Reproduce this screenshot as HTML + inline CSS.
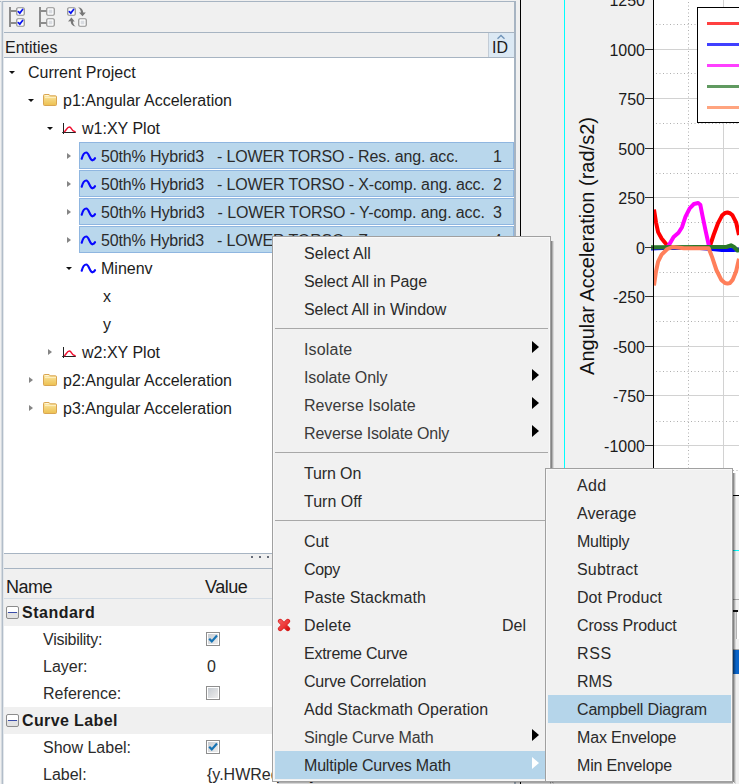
<!DOCTYPE html>
<html><head><meta charset="utf-8"><title>Plot Browser</title>
<style>
html,body{margin:0;padding:0}
body{width:739px;height:784px;overflow:hidden;position:relative;background:#f0f0f0;font-family:"Liberation Sans",sans-serif;font-size:16px;color:#1c1c1c}
.a{position:absolute}
.t{position:absolute;white-space:pre;line-height:20px;height:20px;margin-top:1px}
.sel{position:absolute;left:79px;width:433px;height:25px;background:#b9d7ec;border:1px solid #8fb6e0;border-radius:0}
.menu{position:absolute;background:#f1f1f1;border:1px solid #a0a0a0;box-sizing:border-box;box-shadow:inset 1px 1px 0 #f8f8f8,inset -1px -1px 0 #f8f8f8}
.mi{position:absolute;left:31px;white-space:pre;line-height:20px;height:20px;color:#2a2a2a;margin-top:1px;}
.sep{position:absolute;left:2px;height:1px;background:#a8a8a8}
.arr{position:absolute;width:0;height:0;border-top:6px solid transparent;border-bottom:6px solid transparent;border-left:7px solid #000;margin-top:1px}
.col{position:absolute;width:0;height:0;border-top:3.5px solid transparent;border-bottom:3.5px solid transparent;border-left:4px solid #858585;margin-top:.5px}
.exp{position:absolute;width:0;height:0;border-left:3.5px solid transparent;border-right:3.5px solid transparent;border-top:3px solid #111}
</style></head><body>
<!-- LEFT PANEL -->
<div class="a" style="left:0px;top:1px;width:515px;height:1px;background:#a7b4c2;"></div>
<div class="a" style="left:1px;top:1px;width:1px;height:783px;background:#d4dae0;"></div>
<div class="a" style="left:2px;top:1px;width:1px;height:783px;background:#b2bdc9;"></div>
<div class="a" style="left:3px;top:2px;width:1px;height:782px;background:#e4e8ec;"></div>
<div class="a" style="left:514px;top:1px;width:2px;height:783px;background:#a7b4c2;"></div>
<div class="a" style="left:4px;top:32px;width:510px;height:1px;background:#a7b4c2;"></div>
<div class="a" style="left:4px;top:57px;width:510px;height:1px;background:#a7b4c2;"></div>
<div class="a" style="left:4px;top:58px;width:510px;height:495px;background:#fff;"></div>
<div class="a" style="left:4px;top:553px;width:510px;height:1px;background:#a7b4c2;"></div>
<div class="a" style="left:4px;top:568px;width:510px;height:1px;background:#a7b4c2;"></div>
<div class="a" style="left:4px;top:598px;width:510px;height:1px;background:#d5dde5;"></div>
<div class="a" style="left:4px;top:626px;width:510px;height:81px;background:#fff;"></div>
<div class="a" style="left:4px;top:734px;width:510px;height:50px;background:#fff;"></div>
<div class="a" style="left:488px;top:33px;width:26px;height:24px;background:#dce9f4;border-left:1px solid #c3ccd6;box-sizing:border-box"></div>
<div class="t" style="left:492px;top:37px;">ID</div>
<svg class="a" style="left:496px;top:34px" width="10" height="6" viewBox="0 0 10 6"><path d="M1.5 4.8 L5 1.5 L8.5 4.8" fill="none" stroke="#6f93b8" stroke-width="1.3"/></svg>
<div class="t" style="left:5px;top:37px;">Entities</div>
<!-- TOOLBAR -->
<svg class="a" style="left:0;top:0" width="100" height="32" viewBox="0 0 100 32"><rect x="9" y="7" width="2" height="20" fill="#8c8c8c"/><rect x="11" y="10" width="6" height="2" fill="#8c8c8c"/><rect x="11" y="22" width="6" height="2" fill="#8c8c8c"/><rect x="16.75" y="7.75" width="7.5" height="7.5" rx="1.2" fill="#fff" stroke="#909090" stroke-width="1.2"/><path d="M18.3 11.6 L19.8 13.1 L22.6 9.5" fill="none" stroke="#0a14f0" stroke-width="1.7" stroke-linecap="round"/><rect x="16.75" y="18.75" width="7.5" height="7.5" rx="1.2" fill="#fff" stroke="#909090" stroke-width="1.2"/><path d="M18.3 22.6 L19.8 24.1 L22.6 20.5" fill="none" stroke="#0a14f0" stroke-width="1.7" stroke-linecap="round"/><rect x="39" y="7" width="2" height="20" fill="#8c8c8c"/><rect x="41" y="10" width="6" height="2" fill="#8c8c8c"/><rect x="41" y="22" width="6" height="2" fill="#8c8c8c"/><rect x="46.75" y="7.75" width="7.5" height="7.5" rx="1.2" fill="#fff" stroke="#909090" stroke-width="1.2"/><rect x="48.6" y="9.6" width="3.8" height="3.8" fill="#d9dce1"/><rect x="46.75" y="18.75" width="7.5" height="7.5" rx="1.2" fill="#fff" stroke="#909090" stroke-width="1.2"/><rect x="48.6" y="20.6" width="3.8" height="3.8" fill="#d9dce1"/><rect x="67.75" y="7.75" width="7.5" height="7.5" rx="1.2" fill="#fff" stroke="#909090" stroke-width="1.2"/><path d="M69.3 11.6 L70.8 13.1 L73.6 9.5" fill="none" stroke="#0a14f0" stroke-width="1.7" stroke-linecap="round"/><rect x="78.75" y="18.75" width="7.5" height="7.5" rx="1.2" fill="#fff" stroke="#909090" stroke-width="1.2"/><rect x="80.6" y="20.6" width="3.8" height="3.8" fill="#d9dce1"/><path d="M78 7.3 C81.5 7.6 83.2 10 83.2 12.6 L85.8 12.4 L82.5 16.2 L79 12.4 L81 12.5 C80.8 10.4 79.8 8.6 78 7.3z" fill="#777"/><path d="M75.9 26.6 C72.4 26.3 70.7 23.9 70.7 21.3 L68 21.4 L71.4 17.4 L74.7 21.4 L72.9 21.4 C73.1 23.5 74.1 25.3 75.9 26.6z" fill="#777"/></svg>
<!-- TREE -->
<div class="exp" style="left:9px;top:71px"></div>
<div class="t" style="left:28px;top:62px;">Current Project</div>
<div class="exp" style="left:28px;top:99px"></div>
<svg class="a" style="left:42px;top:92px" width="16" height="14" viewBox="0 0 16 14"><defs><linearGradient id="fg4292" x1="0" y1="0" x2="0" y2="1"><stop offset="0" stop-color="#fbe6a2"/><stop offset="1" stop-color="#ecc050"/></linearGradient></defs><path d="M2.5 2.5 h4.6 l1.2 1.3 h5.2 a1 1 0 0 1 1 1 v7.7 a1 1 0 0 1 -1 1 h-11 a1 1 0 0 1 -1 -1 v-9 a1 1 0 0 1 1 -1z" fill="url(#fg4292)" stroke="#d9a552" stroke-width="1"/><path d="M3.3 3.6 h3.4" stroke="#fff6dc" stroke-width="1.2"/><path d="M3 5.6 h11" stroke="#fdf0c4" stroke-width="1"/></svg>
<div class="t" style="left:63px;top:90px;">p1:Angular Acceleration</div>
<div class="exp" style="left:47px;top:127px"></div>
<svg class="a" style="left:61px;top:120px" width="16" height="14" viewBox="0 0 16 14"><path d="M2.5 3 V14 M1.2 12.5 H14.8" fill="none" stroke="#222" stroke-width="1"/><path d="M3.2 12 C5 11 6 7 8.4 7 C10.6 7 10.8 11 13 11.2 L14.6 11.8" fill="none" stroke="#f01030" stroke-width="1.4"/></svg>
<div class="t" style="left:82px;top:118px;">w1:XY Plot</div>
<div class="sel" style="top:142px"></div>
<div class="col" style="left:67px;top:152px"></div>
<svg class="a" style="left:79.6px;top:149.2px" width="17" height="14" viewBox="0 0 17 14"><path d="M1.7 9.7 C2.7 6 4.4 3.5 6.3 3.5 C9 3.5 9.7 11.3 12.4 11.3 C13.6 11 14.4 10.3 15 9.2" fill="none" stroke="#0808ff" stroke-width="2.2" stroke-linecap="round"/></svg>
<div class="t" style="left:101px;top:146px;color:#2b2b2b;letter-spacing:-0.145px">50th% Hybrid3   - LOWER TORSO - Res. ang. acc.</div>
<div class="t" style="left:493px;top:146px;color:#2b2b2b">1</div>
<div class="sel" style="top:170px"></div>
<div class="col" style="left:67px;top:180px"></div>
<svg class="a" style="left:79.6px;top:177.2px" width="17" height="14" viewBox="0 0 17 14"><path d="M1.7 9.7 C2.7 6 4.4 3.5 6.3 3.5 C9 3.5 9.7 11.3 12.4 11.3 C13.6 11 14.4 10.3 15 9.2" fill="none" stroke="#0808ff" stroke-width="2.2" stroke-linecap="round"/></svg>
<div class="t" style="left:101px;top:174px;color:#2b2b2b;letter-spacing:-0.14px">50th% Hybrid3   - LOWER TORSO - X-comp. ang. acc.</div>
<div class="t" style="left:493px;top:174px;color:#2b2b2b">2</div>
<div class="sel" style="top:198px"></div>
<div class="col" style="left:67px;top:208px"></div>
<svg class="a" style="left:79.6px;top:205.2px" width="17" height="14" viewBox="0 0 17 14"><path d="M1.7 9.7 C2.7 6 4.4 3.5 6.3 3.5 C9 3.5 9.7 11.3 12.4 11.3 C13.6 11 14.4 10.3 15 9.2" fill="none" stroke="#0808ff" stroke-width="2.2" stroke-linecap="round"/></svg>
<div class="t" style="left:101px;top:202px;color:#2b2b2b;letter-spacing:-0.105px">50th% Hybrid3   - LOWER TORSO - Y-comp. ang. acc.</div>
<div class="t" style="left:493px;top:202px;color:#2b2b2b">3</div>
<div class="sel" style="top:226px"></div>
<div class="col" style="left:67px;top:236px"></div>
<svg class="a" style="left:79.6px;top:233.2px" width="17" height="14" viewBox="0 0 17 14"><path d="M1.7 9.7 C2.7 6 4.4 3.5 6.3 3.5 C9 3.5 9.7 11.3 12.4 11.3 C13.6 11 14.4 10.3 15 9.2" fill="none" stroke="#0808ff" stroke-width="2.2" stroke-linecap="round"/></svg>
<div class="t" style="left:101px;top:230px;color:#2b2b2b;letter-spacing:-0.14px">50th% Hybrid3   - LOWER TORSO - Z-comp. ang. acc.</div>
<div class="t" style="left:493px;top:230px;color:#2b2b2b">4</div>
<div class="exp" style="left:66px;top:267px"></div>
<svg class="a" style="left:79.6px;top:261.2px" width="17" height="14" viewBox="0 0 17 14"><path d="M1.7 9.7 C2.7 6 4.4 3.5 6.3 3.5 C9 3.5 9.7 11.3 12.4 11.3 C13.6 11 14.4 10.3 15 9.2" fill="none" stroke="#0808ff" stroke-width="2.2" stroke-linecap="round"/></svg>
<div class="t" style="left:101px;top:258px;">Minenv</div>
<div class="t" style="left:103px;top:286px;">x</div>
<div class="t" style="left:103px;top:314px;">y</div>
<div class="col" style="left:48px;top:348px"></div>
<svg class="a" style="left:61px;top:344px" width="16" height="14" viewBox="0 0 16 14"><path d="M2.5 3 V14 M1.2 12.5 H14.8" fill="none" stroke="#222" stroke-width="1"/><path d="M3.2 12 C5 11 6 7 8.4 7 C10.6 7 10.8 11 13 11.2 L14.6 11.8" fill="none" stroke="#f01030" stroke-width="1.4"/></svg>
<div class="t" style="left:82px;top:342px;">w2:XY Plot</div>
<div class="col" style="left:29px;top:376px"></div>
<svg class="a" style="left:42px;top:372px" width="16" height="14" viewBox="0 0 16 14"><defs><linearGradient id="fg42372" x1="0" y1="0" x2="0" y2="1"><stop offset="0" stop-color="#fbe6a2"/><stop offset="1" stop-color="#ecc050"/></linearGradient></defs><path d="M2.5 2.5 h4.6 l1.2 1.3 h5.2 a1 1 0 0 1 1 1 v7.7 a1 1 0 0 1 -1 1 h-11 a1 1 0 0 1 -1 -1 v-9 a1 1 0 0 1 1 -1z" fill="url(#fg42372)" stroke="#d9a552" stroke-width="1"/><path d="M3.3 3.6 h3.4" stroke="#fff6dc" stroke-width="1.2"/><path d="M3 5.6 h11" stroke="#fdf0c4" stroke-width="1"/></svg>
<div class="t" style="left:63px;top:370px;">p2:Angular Acceleration</div>
<div class="col" style="left:29px;top:404px"></div>
<svg class="a" style="left:42px;top:400px" width="16" height="14" viewBox="0 0 16 14"><defs><linearGradient id="fg42400" x1="0" y1="0" x2="0" y2="1"><stop offset="0" stop-color="#fbe6a2"/><stop offset="1" stop-color="#ecc050"/></linearGradient></defs><path d="M2.5 2.5 h4.6 l1.2 1.3 h5.2 a1 1 0 0 1 1 1 v7.7 a1 1 0 0 1 -1 1 h-11 a1 1 0 0 1 -1 -1 v-9 a1 1 0 0 1 1 -1z" fill="url(#fg42400)" stroke="#d9a552" stroke-width="1"/><path d="M3.3 3.6 h3.4" stroke="#fff6dc" stroke-width="1.2"/><path d="M3 5.6 h11" stroke="#fdf0c4" stroke-width="1"/></svg>
<div class="t" style="left:63px;top:398px;">p3:Angular Acceleration</div>
<!-- PROPERTIES -->
<div class="t" style="left:6px;top:576px;font-size:18px;letter-spacing:-0.5px;margin-top:0.5px">Name</div>
<div class="t" style="left:205px;top:576px;font-size:18px;letter-spacing:-0.5px;margin-top:0.5px">Value</div>
<div class="t" style="left:22px;top:602px;font-weight:bold;letter-spacing:0.5px">Standard</div>
<div class="t" style="left:22px;top:710px;font-weight:bold;letter-spacing:0.38px">Curve Label</div>
<div class="t" style="left:43px;top:629px;color:#2b2b2b"><span style="letter-spacing:-0.25px">Visibility:</span></div>
<div class="t" style="left:43px;top:656px;color:#2b2b2b">Layer:</div>
<div class="t" style="left:43px;top:683px;color:#2b2b2b">Reference:</div>
<div class="t" style="left:43px;top:737px;color:#2b2b2b">Show Label:</div>
<div class="t" style="left:43px;top:764px;color:#2b2b2b">Label:</div>
<div class="t" style="left:207px;top:656px;color:#2b2b2b">0</div>
<div class="t" style="left:207px;top:764px;color:#2b2b2b">{y.HWRequest}</div>
<div class="a" style="left:6px;top:606px;width:13px;height:13px;box-sizing:border-box;border:1px solid #8c8c8c;border-radius:2px;background:linear-gradient(#fff 50%,#e2e2e2 50%)"></div><div class="a" style="left:8px;top:612px;width:9px;height:1px;background:#3a4ca8"></div>
<div class="a" style="left:6px;top:714px;width:13px;height:13px;box-sizing:border-box;border:1px solid #8c8c8c;border-radius:2px;background:linear-gradient(#fff 50%,#e2e2e2 50%)"></div><div class="a" style="left:8px;top:720px;width:9px;height:1px;background:#3a4ca8"></div>
<div class="a" style="left:206px;top:632px;width:14px;height:14px;box-sizing:border-box;border:1px solid #8e8e8e;background:#fff"></div><div class="a" style="left:208px;top:634px;width:10px;height:10px;background:linear-gradient(135deg,#c6cbd1,#ededed)"></div><svg class="a" style="left:206px;top:632px" width="14" height="14" viewBox="0 0 14 14"><path d="M3.2 6.8 L5.8 9.4 L11 3.6" fill="none" stroke="#1673b4" stroke-width="2.2"/></svg>
<div class="a" style="left:206px;top:686px;width:14px;height:14px;box-sizing:border-box;border:1px solid #8e8e8e;background:#fff"></div><div class="a" style="left:208px;top:688px;width:10px;height:10px;background:linear-gradient(135deg,#c6cbd1,#ededed)"></div>
<div class="a" style="left:206px;top:740px;width:14px;height:14px;box-sizing:border-box;border:1px solid #8e8e8e;background:#fff"></div><div class="a" style="left:208px;top:742px;width:10px;height:10px;background:linear-gradient(135deg,#c6cbd1,#ededed)"></div><svg class="a" style="left:206px;top:740px" width="14" height="14" viewBox="0 0 14 14"><path d="M3.2 6.8 L5.8 9.4 L11 3.6" fill="none" stroke="#1673b4" stroke-width="2.2"/></svg>
<div class="a" style="left:251px;top:556px;width:2px;height:2px;background:#666c78;"></div>
<div class="a" style="left:259px;top:556px;width:2px;height:2px;background:#666c78;"></div>
<div class="a" style="left:267px;top:556px;width:2px;height:2px;background:#666c78;"></div>
<!-- CHART -->
<svg class="a" style="left:516px;top:0" width="223" height="784" viewBox="516 0 223 784" font-family="Liberation Sans, sans-serif">
<rect x="516" y="0" width="223" height="784" fill="#f0f0f0"/>
<rect x="520" y="0" width="1" height="784" fill="#000"/>
<rect x="564" y="0" width="1" height="550" fill="#00ffff"/>
<rect x="564" y="550" width="175" height="1" fill="#00ffff"/>
<rect x="654" y="0" width="85" height="495" fill="#fff"/>
<line x1="656" x2="739" y1="24.5" y2="24.5" stroke="#b0b0b0" stroke-width="1" stroke-dasharray="1 2.5"/>
<line x1="654" x2="739" y1="49.5" y2="49.5" stroke="#d2d2d2" stroke-width="1"/>
<line x1="656" x2="739" y1="73.5" y2="73.5" stroke="#b0b0b0" stroke-width="1" stroke-dasharray="1 2.5"/>
<line x1="654" x2="739" y1="98.5" y2="98.5" stroke="#d2d2d2" stroke-width="1"/>
<line x1="656" x2="739" y1="123.5" y2="123.5" stroke="#b0b0b0" stroke-width="1" stroke-dasharray="1 2.5"/>
<line x1="654" x2="739" y1="148.5" y2="148.5" stroke="#d2d2d2" stroke-width="1"/>
<line x1="656" x2="739" y1="173.5" y2="173.5" stroke="#b0b0b0" stroke-width="1" stroke-dasharray="1 2.5"/>
<line x1="654" x2="739" y1="197.5" y2="197.5" stroke="#d2d2d2" stroke-width="1"/>
<line x1="656" x2="739" y1="222.5" y2="222.5" stroke="#b0b0b0" stroke-width="1" stroke-dasharray="1 2.5"/>
<line x1="654" x2="739" y1="247.5" y2="247.5" stroke="#d2d2d2" stroke-width="1"/>
<line x1="656" x2="739" y1="272.5" y2="272.5" stroke="#b0b0b0" stroke-width="1" stroke-dasharray="1 2.5"/>
<line x1="654" x2="739" y1="296.5" y2="296.5" stroke="#d2d2d2" stroke-width="1"/>
<line x1="656" x2="739" y1="321.5" y2="321.5" stroke="#b0b0b0" stroke-width="1" stroke-dasharray="1 2.5"/>
<line x1="654" x2="739" y1="346.5" y2="346.5" stroke="#d2d2d2" stroke-width="1"/>
<line x1="656" x2="739" y1="371.5" y2="371.5" stroke="#b0b0b0" stroke-width="1" stroke-dasharray="1 2.5"/>
<line x1="654" x2="739" y1="395.5" y2="395.5" stroke="#d2d2d2" stroke-width="1"/>
<line x1="656" x2="739" y1="421.5" y2="421.5" stroke="#b0b0b0" stroke-width="1" stroke-dasharray="1 2.5"/>
<line x1="654" x2="739" y1="445.5" y2="445.5" stroke="#d2d2d2" stroke-width="1"/>
<line x1="656" x2="739" y1="470.5" y2="470.5" stroke="#b0b0b0" stroke-width="1" stroke-dasharray="1 2.5"/>
<line x1="688.5" x2="688.5" y1="2" y2="495" stroke="#b0b0b0" stroke-width="1" stroke-dasharray="1 2.5"/>
<line x1="723.5" x2="723.5" y1="0" y2="495" stroke="#d2d2d2" stroke-width="1"/>
<clipPath id="pc"><rect x="654" y="0" width="85" height="495"/></clipPath><clipPath id="pc2"><rect x="651" y="0" width="88" height="495"/></clipPath><g fill="none" stroke-width="4" stroke-linejoin="round" stroke-linecap="butt">
<path d="M651 248.6 L668 247.8 L700 248 L712 249 L722 250 L733 250 L739 249.5" stroke="#0000ff" clip-path="url(#pc2)"/>
<path d="M654 209.5 L656 222.3 L658.1 232.1 L661.6 238.5 L667.3 245.5 L669 247" stroke="#ff0000" clip-path="url(#pc)"/>
<path d="M708.5 247 L710.1 245.5 L713.6 235 L717.8 223.7 L722 215.6 L725 213 L727.5 212.5 L730 213.2 L732.5 215.3 L736.1 222.3 L739 235" stroke="#ff0000" clip-path="url(#pc)"/>
<path d="M667 247.5 L668.7 245.5 L673.6 237 L678.5 232.8 L682 227.2 L685.5 216.7 L689.7 208.3 L693.9 204 L698.2 203 L700.3 204.7 L702.4 215.3 L705.9 232.1 L708.7 244.8 L709.5 247.5" stroke="#ff00ff" clip-path="url(#pc)"/>
<path d="M651 247.3 L700 247 L727 246.8 L731 245.4 L734 247 L737.5 250.4 L739 250" stroke="#2b7a2b" stroke-width="4.2" clip-path="url(#pc2)"/>
<path d="M654 285.5 L656 271.5 L658.1 261.6 L661.6 254.6 L667.3 249 L672.9 246.9 L684 248.3 L708.7 248.3 L712.2 257.4 L716.4 270 L721.3 279.9 L725 283 L727.5 283.6 L730 283 L732.6 279.9 L736.1 271.5 L739 258.8" stroke="#ff7f5a" clip-path="url(#pc)"/>
</g>
<rect x="653" y="0" width="1" height="496" fill="#000"/>
<rect x="653" y="495" width="86" height="1" fill="#000"/>
<rect x="645" y="-1" width="8" height="1" fill="#333"/>
<text x="645" y="6.2" font-size="16" text-anchor="end" fill="#1a1a1a">1250</text>
<rect x="645" y="49" width="8" height="1" fill="#333"/>
<text x="645" y="56.2" font-size="16" text-anchor="end" fill="#1a1a1a">1000</text>
<rect x="645" y="98" width="8" height="1" fill="#333"/>
<text x="645" y="105.2" font-size="16" text-anchor="end" fill="#1a1a1a">750</text>
<rect x="645" y="148" width="8" height="1" fill="#333"/>
<text x="645" y="155.2" font-size="16" text-anchor="end" fill="#1a1a1a">500</text>
<rect x="645" y="197" width="8" height="1" fill="#333"/>
<text x="645" y="204.2" font-size="16" text-anchor="end" fill="#1a1a1a">250</text>
<rect x="645" y="247" width="8" height="1" fill="#333"/>
<text x="645" y="254.2" font-size="16" text-anchor="end" fill="#1a1a1a">0</text>
<rect x="645" y="296" width="8" height="1" fill="#333"/>
<text x="645" y="303.2" font-size="16" text-anchor="end" fill="#1a1a1a">-250</text>
<rect x="645" y="346" width="8" height="1" fill="#333"/>
<text x="645" y="353.2" font-size="16" text-anchor="end" fill="#1a1a1a">-500</text>
<rect x="645" y="395" width="8" height="1" fill="#333"/>
<text x="645" y="402.2" font-size="16" text-anchor="end" fill="#1a1a1a">-750</text>
<rect x="645" y="445" width="8" height="1" fill="#333"/>
<text x="645" y="452.2" font-size="16" text-anchor="end" fill="#1a1a1a">-1000</text>
<text transform="translate(594,246) rotate(-90)" font-size="20" text-anchor="middle" fill="#111">Angular Acceleration (rad/s2)</text>
<rect x="697.5" y="7.5" width="50" height="115" fill="#fff" stroke="#000" stroke-width="1"/>
<rect x="707" y="22" width="32" height="3" fill="#ff4040"/>
<rect x="707" y="43" width="32" height="3" fill="#4040ff"/>
<rect x="707" y="64" width="32" height="3" fill="#ff40ff"/>
<rect x="707" y="85" width="32" height="3" fill="#609a60"/>
<rect x="707" y="106" width="32" height="3" fill="#ffa47f"/>
<rect x="733" y="599" width="6" height="1" fill="#a8a8a8"/>
<rect x="733" y="610" width="5" height="2" fill="#111"/>
<rect x="736" y="612" width="1" height="27" fill="#b4b4b4"/>
<rect x="737" y="612" width="2" height="27" fill="#fff"/>
<rect x="733" y="649" width="6" height="1" fill="#a8a8a8"/>
<rect x="733" y="650" width="6" height="24" fill="#0a64c8"/>
</svg>
<!-- MENUS -->
<div class="a" style="left:551px;top:241px;width:1px;height:541px;background:rgba(0,0,0,0.45);"></div>
<div class="a" style="left:552px;top:241px;width:1px;height:542px;background:rgba(0,0,0,0.27);"></div>
<div class="a" style="left:553px;top:241px;width:1px;height:543px;background:rgba(0,0,0,0.1);"></div>
<div class="a" style="left:277px;top:782px;width:274px;height:1px;background:rgba(0,0,0,0.32);"></div>
<div class="a" style="left:277px;top:783px;width:274px;height:1px;background:rgba(0,0,0,0.16);"></div>
<div class="menu" style="left:272px;top:236px;width:279px;height:546px">
<div class="a" style="left:2px;top:514px;width:272px;height:28px;background:#b5d5ea"></div>
<div class="mi" style="top:6px;letter-spacing:0.123px;">Select All</div>
<div class="mi" style="top:34px;letter-spacing:-0.088px;">Select All in Page</div>
<div class="mi" style="top:62px;letter-spacing:-0.090px;">Select All in Window</div>
<div class="mi" style="top:102px;letter-spacing:0.167px;color:#3a3a3a;">Isolate</div>
<div class="arr" style="left:259px;top:103px;border-left-color:#000"></div>
<div class="mi" style="top:130px;letter-spacing:-0.091px;color:#3a3a3a;">Isolate Only</div>
<div class="arr" style="left:259px;top:131px;border-left-color:#000"></div>
<div class="mi" style="top:158px;letter-spacing:0.036px;color:#3a3a3a;">Reverse Isolate</div>
<div class="arr" style="left:259px;top:159px;border-left-color:#000"></div>
<div class="mi" style="top:186px;letter-spacing:-0.168px;color:#3a3a3a;">Reverse Isolate Only</div>
<div class="arr" style="left:259px;top:187px;border-left-color:#000"></div>
<div class="mi" style="top:226px;letter-spacing:-0.133px;">Turn On</div>
<div class="mi" style="top:254px;">Turn Off</div>
<div class="mi" style="top:294px;letter-spacing:-0.100px;">Cut</div>
<div class="mi" style="top:322px;letter-spacing:-0.333px;">Copy</div>
<div class="mi" style="top:350px;letter-spacing:0.064px;">Paste Stackmath</div>
<div class="mi" style="top:378px;letter-spacing:0.160px;">Delete</div>
<div class="mi" style="top:406px;letter-spacing:-0.258px;">Extreme Curve</div>
<div class="mi" style="top:434px;letter-spacing:-0.194px;">Curve Correlation</div>
<div class="mi" style="top:462px;letter-spacing:0.041px;">Add Stackmath Operation</div>
<div class="mi" style="top:490px;letter-spacing:-0.119px;color:#3a3a3a;">Single Curve Math</div>
<div class="arr" style="left:259px;top:491px;border-left-color:#000"></div>
<div class="mi" style="top:518px;letter-spacing:-0.178px;">Multiple Curves Math</div>
<div class="arr" style="left:259px;top:519px;border-left-color:#fff"></div>
<div class="sep" style="top:91px;width:273px"></div>
<div class="sep" style="top:215px;width:273px"></div>
<div class="sep" style="top:283px;width:273px"></div>
<div class="mi" style="left:229px;top:378px">Del</div>
<svg class="a" style="left:4px;top:381px" width="14" height="14" viewBox="0 0 14 14"><defs><linearGradient id="xg" x1="0" y1="0" x2="1" y2="1"><stop offset="0" stop-color="#f25555"/><stop offset="0.55" stop-color="#ee3a3a"/><stop offset="1" stop-color="#d81414"/></linearGradient></defs><path d="M3.2 3.2 L10.8 10.8 M10.8 3.2 L3.2 10.8" stroke="#d42020" stroke-width="4.6" stroke-linecap="round"/><path d="M3.2 3.2 L10.8 10.8 M10.8 3.2 L3.2 10.8" stroke="url(#xg)" stroke-width="3.4" stroke-linecap="round"/></svg>
</div>
<div class="a" style="left:733px;top:473px;width:1px;height:309px;background:rgba(0,0,0,0.45);"></div>
<div class="a" style="left:734px;top:473px;width:1px;height:310px;background:rgba(0,0,0,0.27);"></div>
<div class="a" style="left:735px;top:473px;width:1px;height:311px;background:rgba(0,0,0,0.1);"></div>
<div class="a" style="left:550px;top:782px;width:183px;height:1px;background:rgba(0,0,0,0.32);"></div>
<div class="a" style="left:550px;top:783px;width:183px;height:1px;background:rgba(0,0,0,0.16);"></div>
<div class="menu" style="left:545px;top:468px;width:188px;height:314px">
<div class="a" style="left:2px;top:226px;width:183px;height:28px;background:#b5d5ea"></div>
<div class="mi" style="left:31px;top:6px;letter-spacing:0.400px;">Add</div>
<div class="mi" style="left:31px;top:34px;letter-spacing:0.017px;">Average</div>
<div class="mi" style="left:31px;top:62px;letter-spacing:-0.258px;">Multiply</div>
<div class="mi" style="left:31px;top:90px;letter-spacing:0.185px;">Subtract</div>
<div class="mi" style="left:31px;top:118px;letter-spacing:0.040px;">Dot Product</div>
<div class="mi" style="left:31px;top:146px;letter-spacing:-0.134px;">Cross Product</div>
<div class="mi" style="left:31px;top:174px;letter-spacing:0.600px;">RSS</div>
<div class="mi" style="left:31px;top:202px;letter-spacing:-0.050px;">RMS</div>
<div class="mi" style="left:31px;top:230px;letter-spacing:-0.167px;">Campbell Diagram</div>
<div class="mi" style="left:31px;top:258px;letter-spacing:-0.172px;">Max Envelope</div>
<div class="mi" style="left:31px;top:286px;letter-spacing:-0.172px;">Min Envelope</div>
</div>
</body></html>
